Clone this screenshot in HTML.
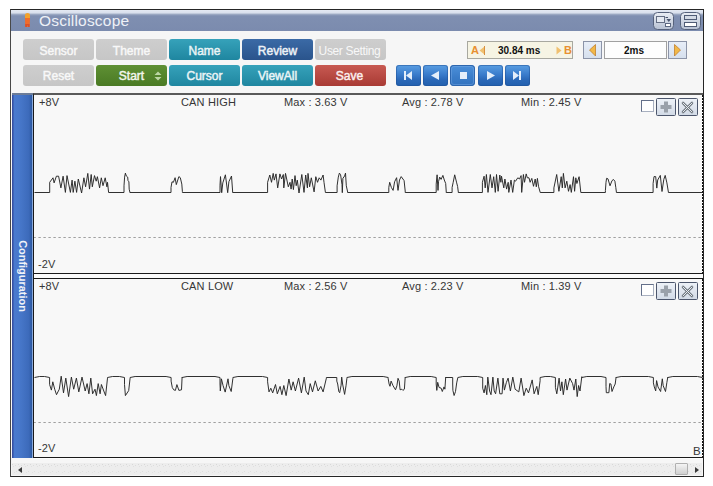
<!DOCTYPE html>
<html><head><meta charset="utf-8">
<style>
*{margin:0;padding:0;box-sizing:border-box}
html,body{width:713px;height:486px;overflow:hidden;background:#fff;font-family:"Liberation Sans",sans-serif}
.abs{position:absolute}
#win{position:absolute;left:10px;top:9px;width:694px;height:468px;border:1px solid #262626;border-left-color:#484848;background:#f6f6f6}
#title{position:absolute;left:11px;top:10px;width:692px;height:21px;background:linear-gradient(#e4e9f3 0px,#d8dfec 3px,#a8b4cb 4px,#8b9ab8 5px,#7f8fb1 6.5px,#7b8bae 21px)}
#title .t{position:absolute;left:29px;top:1px;color:#eef1f7;font-size:15.5px;letter-spacing:0.2px;line-height:19px}
.btn{position:absolute;width:71px;height:21px;border-radius:3px;color:#fff;font-weight:normal;-webkit-text-stroke:0.45px currentColor;font-size:12px;text-align:center;line-height:23px}
.gray{background:linear-gradient(#cecece,#c6c6c6);color:#f8f8f8}
.teal{background:linear-gradient(#36a2ba,#1f86a0);color:#eaf4f6}
.navy{background:linear-gradient(#3b6aa6,#2a548c);color:#eef2f7}
.green{background:linear-gradient(#5f9034,#4a7a24);color:#f2f6ec}
.red{background:linear-gradient(#c85a52,#a83a34);color:#fbeeee}
.mbtn{position:absolute;top:65px;width:25px;height:21px;border-radius:3px;background:linear-gradient(#5a9ee2,#3a7ccc 45%,#2a68b8 70%,#2260ae);box-shadow:inset 0 0 0 1px rgba(30,80,150,0.5)}
.ptxt{position:absolute;font-size:11px;color:#363636;line-height:13px;white-space:nowrap;letter-spacing:0.15px}
.plot{position:absolute;left:33px;width:670px;background:#f8f8f8;border-left:1px solid #1a1a1a;border-bottom:1px solid #1a1a1a}
</style></head><body>
<div id="win"></div>
<div id="title">
  <svg class="abs" style="left:13px;top:3px" width="7" height="14" viewBox="0 0 7 14"><path d="M1 2 Q1 0 3.5 0 Q6 0 6 2 V5 H1Z" fill="#f2a22c"/><path d="M1 5 H6 L5.6 14 H1.2Z" fill="#f06c2a"/><path d="M1.2 11 H5.6 V14 H4 V12.5 H3 V14 H1.2Z" fill="#d8502a"/></svg>
  <div class="t" style="left:28px">Oscilloscope</div>
  <svg class="abs" style="left:642px;top:2px" width="21" height="18" viewBox="0 0 21 18">
    <defs><linearGradient id="ig" x1="0" y1="0" x2="0" y2="1"><stop offset="0" stop-color="#eaeef5"/><stop offset="1" stop-color="#b6c0d2"/></linearGradient></defs>
    <rect x="0.5" y="0.5" width="20" height="17" rx="4" fill="url(#ig)" stroke="#56627c"/>
    <rect x="3.5" y="4.5" width="8" height="6" fill="#e4e9f1" stroke="#646e84"/>
    <rect x="12.5" y="11.5" width="5" height="3" fill="#fff" stroke="#5c6882"/>
    <path d="M12.5 5.5 H15" stroke="#4a5670" fill="none"/><path d="M13.5 7 H18 L15.8 10Z" fill="#4a5670"/>
  </svg>
  <svg class="abs" style="left:669px;top:2px" width="21" height="18" viewBox="0 0 21 18">
    <rect x="0.5" y="0.5" width="20" height="17" rx="4" fill="url(#ig)" stroke="#56627c"/>
    <rect x="4.5" y="3.5" width="12" height="4" fill="#d4dbe6" stroke="#505c76"/>
    <rect x="4.5" y="10.5" width="12" height="4" fill="#fff" stroke="#505c76"/>
  </svg>
</div>

<div class="btn gray" style="left:23px;top:39px;line-height:25px">Sensor</div>
<div class="btn gray" style="left:96px;top:39px;line-height:25px">Theme</div>
<div class="btn teal" style="left:169px;top:39px;line-height:25px">Name</div>
<div class="btn navy" style="left:242px;top:39px;line-height:25px">Review</div>
<div class="btn gray" style="left:315px;top:39px;line-height:25px;-webkit-text-stroke:0;letter-spacing:-0.35px;text-indent:-2px">User Setting</div>
<div class="btn gray" style="left:23px;top:65px">Reset</div>
<div class="btn green" style="left:96px;top:65px"><span style="position:relative;left:0px">Start</span><svg class="abs" style="left:58px;top:6px" width="8" height="10" viewBox="0 0 8 10"><path d="M0.5 4 L4 0.5 L7.5 4Z M0.5 6 L4 9.5 L7.5 6Z" fill="#bcd6a4"/></svg></div>
<div class="btn teal" style="left:169px;top:65px">Cursor</div>
<div class="btn teal" style="left:242px;top:65px">ViewAll</div>
<div class="btn red" style="left:315px;top:65px;text-indent:-2px">Save</div>

<div class="mbtn" style="left:396px"><svg class="abs" style="left:8px;top:6px" width="10" height="10"><rect x="0" y="0" width="2" height="9" fill="#e4eefa"/><path d="M2 4.5 L8 0 V9Z" fill="#e4eefa"/></svg></div>
<div class="mbtn" style="left:423px"><svg class="abs" style="left:8px;top:6px" width="10" height="10"><path d="M0 4.5 L8 0 V9Z" fill="#e4eefa"/></svg></div>
<div class="mbtn" style="left:450px;border-radius:4px;background:linear-gradient(#4c90da,#3a7cc8 60%,#3272be);box-shadow:inset 0 0 0 1px #2d66ae,inset 0 0 0 2px rgba(120,170,230,0.45)"><svg class="abs" style="left:10px;top:7px" width="10" height="10"><rect x="0" y="0" width="7" height="7" fill="#e4eefa"/></svg></div>
<div class="mbtn" style="left:478px"><svg class="abs" style="left:9px;top:6px" width="10" height="10"><path d="M0 0 L8 4.5 L0 9Z" fill="#e4eefa"/></svg></div>
<div class="mbtn" style="left:505px"><svg class="abs" style="left:8px;top:6px" width="10" height="10"><path d="M0 0 L6 4.5 L0 9Z" fill="#e4eefa"/><rect x="6" y="0" width="2" height="9" fill="#e4eefa"/></svg></div>

<div class="abs" style="left:467px;top:41px;width:106px;height:18px;background:#f6f4e4;border:1px solid #a8a8a0"></div>
<div class="abs" style="left:471px;top:44px;font-size:11px;font-weight:bold;color:#e89030;line-height:13px">A</div>
<svg class="abs" style="left:479px;top:46px" width="7" height="10"><path d="M5.5 0.5 L0.5 4.5 L5.5 8.5Z" fill="#f0c070"/><path d="M5.5 0 V9" stroke="#d89040"/></svg>
<div class="abs" style="left:498px;top:44px;font-size:10px;font-weight:bold;color:#111;line-height:13px">30.84 ms</div>
<svg class="abs" style="left:556px;top:46px" width="7" height="10"><path d="M0.5 0.5 L5.5 4.5 L0.5 8.5Z" fill="#f0c070"/></svg>
<div class="abs" style="left:564px;top:44px;font-size:11px;font-weight:bold;color:#e89030;line-height:13px">B</div>

<div class="abs" style="left:583px;top:41px;width:19px;height:18px;background:linear-gradient(#e8eef8,#d6e0ee);border:1px solid #8c94a8"></div>
<svg class="abs" style="left:589px;top:44px" width="8" height="13"><path d="M6.5 0.5 L0.5 6 L6.5 12Z" fill="#f2b848" stroke="#c08030" stroke-width="0.8"/></svg>
<div class="abs" style="left:604px;top:41px;width:63px;height:18px;background:#fdfdfd;border:1px solid #a0a0a0;font-size:10px;font-weight:bold;text-align:center;line-height:17px;padding-right:3px;color:#111">2ms</div>
<div class="abs" style="left:668px;top:41px;width:19px;height:18px;background:linear-gradient(#e8eef8,#d6e0ee);border:1px solid #8c94a8"></div>
<svg class="abs" style="left:674px;top:44px" width="8" height="13"><path d="M0.5 0.5 L6.5 6 L0.5 12Z" fill="#f2b848" stroke="#c08030" stroke-width="0.8"/></svg>

<!-- sidebar -->
<div class="abs" style="left:12px;top:93px;width:21px;height:365px;background:linear-gradient(90deg,#34489a 0px,#3a5cb0 1.2px,#4a7ace 2.5px,#4676c8 9px,#3c6aba 17px,#2e5ba4 19.5px,#8aaadc 20px,#8aaadc 21px)"></div>
<div class="abs" style="left:12px;top:93px;width:21px;height:2px;background:#6c7c98"></div>
<div class="abs" style="left:-22px;top:269px;width:90px;height:14px;transform:rotate(90deg) scaleX(0.95);color:#f0f3f8;font-weight:bold;font-size:11.5px;line-height:14px;text-align:center">Configuration</div>

<!-- plot 1 -->
<div class="plot" style="top:93px;height:181px;border-top:2px solid #5a5a5a"></div>
<div class="abs" style="left:33px;top:274px;width:670px;height:4px;background:#fbfbfb;border-left:1px solid #1a1a1a"></div>
<div class="abs" style="left:34px;top:458px;width:669px;height:1px;background:#fdfdfd"></div>
<div class="plot" style="top:278px;height:180px;border-top:1px solid #1a1a1a"></div>
<svg class="abs" style="left:0;top:0" width="713" height="486">
  <line x1="34" y1="237.5" x2="702" y2="237.5" stroke="#a0a0a0" stroke-dasharray="2.4 2.6" stroke-dashoffset="0.6"/>
  <line x1="34" y1="422.5" x2="702" y2="422.5" stroke="#a0a0a0" stroke-dasharray="2.4 2.6" stroke-dashoffset="0.6"/>
  <line x1="702.5" y1="95" x2="702.5" y2="274" stroke="#111" stroke-dasharray="2 1"/>
  <line x1="702.5" y1="279" x2="702.5" y2="457" stroke="#111" stroke-dasharray="2 1"/>
  <path d="M34.5 192.5 L49.7 192.5 L49.7 182.3 L53.0 177.8 L54.1 182.9 L56.4 176.2 L58.6 176.2 L60.9 187.9 L63.1 176.2 L65.4 192.4 L67.0 175.6 L70.4 192.4 L72.1 180.1 L73.2 192.4 L74.9 181.2 L76.6 192.4 L78.3 179.0 L81.6 193.0 L83.9 177.8 L85.6 186.8 L87.8 173.4 L89.5 189.1 L91.2 174.5 L92.3 186.8 L94.5 175.6 L96.2 181.2 L97.4 176.7 L99.6 187.9 L101.3 177.8 L103.0 185.7 L105.2 177.8 L106.9 186.8 L107.5 182.3 L108.6 192.4 L108.6 192.5 L124.0 192.5 L124.0 185.8 L124.6 177.1 L125.4 173.1 L126.3 176.0 L127.7 177.1 L128.0 180.6 L128.9 181.8 L129.2 189.2 L130.0 192.7 L130.0 192.5 L171.0 192.5 L171.0 187.5 L172.0 181.8 L173.4 182.3 L175.1 177.7 L176.3 184.6 L178.9 176.6 L180.3 177.7 L181.8 184.1 L182.4 191.6 L182.4 192.5 L220.0 192.5 L220.0 185.2 L220.5 176.6 L221.7 192.7 L222.8 182.9 L225.4 174.8 L227.7 192.7 L228.9 181.7 L231.5 176.0 L232.6 191.0 L232.6 192.5 L267.6 192.5 L267.6 182.3 L269.8 175.0 L271.5 182.3 L273.2 173.4 L274.3 180.1 L276.0 173.9 L277.7 187.9 L279.9 173.9 L281.6 179.0 L283.3 174.5 L283.8 187.9 L285.5 173.4 L288.3 186.8 L290.0 182.3 L291.1 189.1 L292.2 179.0 L293.4 189.6 L295.0 175.6 L296.2 185.7 L297.3 180.1 L299.0 193.0 L301.8 174.5 L304.0 192.4 L305.7 175.0 L307.4 187.9 L308.0 173.4 L309.6 186.8 L311.3 177.8 L314.1 191.9 L315.8 176.7 L317.5 182.3 L319.2 177.8 L320.9 180.1 L323.1 175.0 L324.0 182.3 L325.4 192.4 L325.4 192.5 L337.1 192.5 L337.1 185.8 L338.3 177.1 L339.4 173.1 L340.6 174.8 L342.0 184.6 L342.3 192.7 L342.9 178.3 L344.6 176.0 L345.5 173.1 L346.3 185.8 L347.8 192.7 L347.8 192.5 L388.8 192.5 L388.8 187.5 L389.7 182.3 L391.4 187.5 L393.1 190.4 L394.6 181.8 L396.6 177.7 L398.0 190.4 L399.5 180.0 L401.2 176.6 L404.1 180.6 L405.2 191.0 L405.2 192.5 L436.2 192.5 L436.2 184.1 L437.1 174.8 L438.0 190.4 L438.5 181.7 L439.7 177.1 L441.1 179.4 L442.9 175.4 L444.3 180.0 L445.7 183.5 L446.3 192.7 L446.3 192.5 L452.1 192.5 L452.1 187.5 L453.2 182.3 L454.7 174.8 L456.7 182.9 L457.6 186.4 L458.4 192.7 L458.4 192.5 L482.4 192.5 L482.4 182.3 L484.1 176.2 L485.2 187.9 L486.4 174.5 L488.0 192.4 L490.3 174.5 L492.0 187.9 L493.7 176.7 L495.3 192.4 L496.5 174.5 L498.1 191.3 L499.8 175.0 L500.9 182.3 L501.5 176.2 L503.8 187.9 L504.9 179.0 L506.6 189.1 L508.2 182.3 L508.8 192.4 L511.0 180.1 L512.7 192.4 L514.4 180.1 L515.5 181.2 L517.8 177.8 L519.5 179.0 L521.1 175.6 L521.7 192.4 L523.4 174.5 L524.5 182.3 L526.2 173.9 L527.3 177.8 L529.0 177.8 L530.1 182.3 L531.8 178.4 L533.5 186.3 L535.2 179.0 L536.3 186.8 L537.4 178.4 L538.5 186.3 L540.2 192.4 L540.2 192.5 L553.9 192.5 L553.9 187.9 L556.7 174.5 L558.9 191.3 L561.2 176.7 L562.3 187.9 L563.4 173.4 L565.1 187.9 L566.8 181.2 L568.5 191.3 L570.1 184.6 L571.3 192.4 L573.5 176.7 L574.6 191.3 L575.8 177.8 L576.9 183.5 L579.1 176.7 L580.8 192.4 L580.8 192.5 L605.4 192.5 L605.4 190.4 L606.0 182.3 L606.6 178.3 L608.0 178.9 L610.0 185.8 L612.0 180.6 L613.5 179.5 L614.9 181.2 L615.8 187.5 L616.4 192.1 L616.4 192.5 L653.1 192.5 L653.1 183.5 L654.0 176.6 L655.7 176.6 L656.8 188.1 L657.7 180.0 L660.3 175.4 L662.0 191.5 L663.8 179.4 L665.2 175.4 L666.9 182.9 L668.4 192.1 L668.4 192.5 L702.5 192.5" fill="none" stroke="#262626" stroke-width="0.95"/>
  <path d="M34.5 377.5 L39.5 376.5 L44.6 376.5 L49.6 377.5 L49.6 384.5 L51.4 390.1 L52.8 381.8 L54.7 389.2 L56.5 394.7 L59.3 389.2 L61.2 376.2 L63.5 392.9 L65.8 378.1 L68.6 396.6 L71.4 377.1 L73.7 389.2 L76.4 378.1 L78.8 391.9 L82.0 377.1 L85.2 391.0 L87.1 383.6 L88.9 393.8 L90.8 378.1 L92.6 393.8 L95.0 389.2 L96.4 395.6 L98.2 383.6 L100.1 393.8 L101.4 384.5 L103.8 391.0 L105.6 395.6 L107.5 378.1 L107.5 377.5 L112.5 376.5 L119.5 376.5 L124.5 377.5 L124.5 384.5 L125.4 395.6 L128.7 390.6 L130.1 378.1 L130.1 377.5 L135.1 376.5 L166.1 376.5 L171.1 377.5 L171.1 381.1 L172.3 387.5 L173.7 389.8 L175.4 390.4 L176.9 384.6 L178.9 390.4 L181.5 389.8 L182.1 377.1 L182.1 377.5 L187.1 376.5 L215.0 376.5 L220.0 377.5 L220.0 384.0 L220.3 390.9 L221.4 378.8 L223.1 385.7 L225.2 392.1 L228.0 378.8 L228.9 385.7 L231.2 391.5 L232.9 378.3 L232.9 377.5 L237.9 376.5 L262.6 376.5 L267.6 377.5 L267.6 381.8 L269.0 391.9 L270.8 388.2 L272.7 392.9 L275.5 384.5 L277.3 393.8 L280.1 386.4 L281.9 394.7 L283.8 385.5 L286.1 395.6 L288.9 379.0 L291.2 390.1 L293.1 381.8 L295.4 391.0 L298.6 378.1 L301.4 392.9 L304.2 377.1 L306.0 391.0 L308.3 394.7 L310.2 383.6 L312.5 391.9 L315.3 380.8 L318.1 391.0 L320.8 386.4 L323.1 391.9 L326.4 378.1 L326.4 377.5 L336.8 377.5 L336.8 381.1 L337.7 384.0 L338.8 391.5 L339.7 392.7 L341.1 385.2 L341.7 377.1 L342.6 384.0 L344.6 394.4 L346.0 385.8 L346.9 378.3 L346.9 377.5 L351.9 376.5 L383.2 376.5 L388.2 377.5 L388.2 378.8 L389.1 384.0 L390.0 386.3 L391.1 381.1 L393.1 385.8 L395.5 389.8 L396.9 385.8 L398.0 378.3 L399.2 381.1 L400.1 389.8 L401.8 389.2 L402.9 390.4 L404.4 389.2 L405.2 377.1 L405.2 377.5 L410.2 376.5 L431.2 376.5 L436.2 377.5 L436.2 384.0 L436.8 390.4 L437.7 382.3 L439.1 387.5 L441.1 388.1 L442.3 391.5 L444.0 386.9 L444.9 389.2 L445.7 377.1 L445.7 377.5 L452.7 377.5 L452.7 384.0 L452.9 390.4 L454.1 395.5 L455.5 391.5 L456.7 382.9 L457.8 377.7 L457.8 377.5 L462.8 376.5 L477.7 376.5 L482.7 377.5 L482.7 388.2 L484.1 392.9 L485.4 385.5 L486.8 394.7 L487.8 377.1 L489.6 391.0 L491.0 394.7 L492.9 377.1 L494.2 391.0 L495.6 393.8 L497.9 378.1 L499.8 393.8 L502.1 393.8 L503.0 378.1 L504.4 390.1 L506.3 382.7 L508.1 378.1 L510.4 391.0 L512.8 377.1 L515.1 389.2 L518.8 391.9 L521.1 378.1 L523.9 395.6 L526.2 388.2 L528.5 392.9 L532.2 379.9 L534.1 393.8 L536.8 386.4 L538.2 394.7 L540.1 380.8 L540.1 377.5 L545.1 376.5 L550.4 376.5 L555.4 377.5 L555.4 387.3 L556.8 393.8 L559.1 378.1 L560.5 391.0 L561.9 381.8 L563.3 394.7 L565.6 379.0 L567.0 390.1 L569.8 378.1 L572.6 383.6 L574.0 390.1 L575.8 379.0 L577.2 396.6 L578.6 385.5 L580.0 391.0 L581.8 376.7 L581.8 377.5 L586.8 376.5 L601.0 376.5 L606.0 377.5 L606.0 386.3 L606.3 392.7 L608.9 392.7 L609.7 383.5 L610.9 384.0 L612.0 391.5 L613.8 386.9 L615.2 384.0 L616.1 377.1 L616.1 377.5 L621.1 376.5 L648.4 376.5 L653.4 377.5 L653.4 382.9 L654.3 386.9 L655.7 390.9 L656.6 380.6 L658.0 386.9 L660.6 391.5 L662.3 378.8 L663.2 385.7 L665.5 391.5 L666.9 382.3 L667.8 377.1 L667.8 377.5 L672.8 376.5 L697.5 376.5 L702.5 377.5" fill="none" stroke="#262626" stroke-width="0.95"/>
</svg>
<div class="ptxt" style="left:39px;top:96px">+8V</div>
<div class="ptxt" style="left:181px;top:96px">CAN HIGH</div>
<div class="ptxt" style="left:284px;top:96px">Max : 3.63 V</div>
<div class="ptxt" style="left:402px;top:96px">Avg : 2.78 V</div>
<div class="ptxt" style="left:521px;top:96px">Min : 2.45 V</div>
<div class="ptxt" style="left:38px;top:258px">-2V</div>

<div class="ptxt" style="left:39px;top:280px">+8V</div>
<div class="ptxt" style="left:181px;top:280px">CAN LOW</div>
<div class="ptxt" style="left:284px;top:280px">Max : 2.56 V</div>
<div class="ptxt" style="left:402px;top:280px">Avg : 2.23 V</div>
<div class="ptxt" style="left:521px;top:280px">Min : 1.39 V</div>
<div class="ptxt" style="left:38px;top:442px">-2V</div>
<div class="ptxt" style="left:693px;top:445px;font-size:11.5px;letter-spacing:0">B</div>

<!-- plot controls -->
<div class="abs" style="left:641px;top:100px;width:13px;height:12px;background:#fff;border:1px solid #64708a;border-right-color:#a8b0c0;border-bottom-color:#a8b0c0"></div>
<svg class="abs" style="left:656px;top:98px" width="42" height="19" viewBox="0 0 42 19">
 <defs><linearGradient id="cg93" x1="0" y1="0" x2="0" y2="1"><stop offset="0" stop-color="#eef2f8"/><stop offset="1" stop-color="#d2dae6"/></linearGradient></defs>
 <rect x="0.5" y="0.5" width="19" height="17" rx="1" fill="url(#cg93)" stroke="#4c566c"/>
 <path d="M8 3.5 h4 v3.5 h3.5 v4 h-3.5 v3.5 h-4 v-3.5 h-3.5 v-4 h3.5z" fill="#9aa1aa"/>
 <rect x="22.5" y="0.5" width="19" height="17" rx="1" fill="url(#cg93)" stroke="#4c566c"/>
 <path d="M27 5 L36 14 M36 5 L27 14" stroke="#707880" stroke-width="2.6" stroke-linecap="round"/>
 <path d="M27 5 L36 14 M36 5 L27 14" stroke="#e8ecf2" stroke-width="1" stroke-linecap="round"/>
</svg>
<div class="abs" style="left:641px;top:284px;width:13px;height:12px;background:#fff;border:1px solid #64708a;border-right-color:#a8b0c0;border-bottom-color:#a8b0c0"></div>
<svg class="abs" style="left:656px;top:282px" width="42" height="19" viewBox="0 0 42 19">
 <defs><linearGradient id="cg277" x1="0" y1="0" x2="0" y2="1"><stop offset="0" stop-color="#eef2f8"/><stop offset="1" stop-color="#d2dae6"/></linearGradient></defs>
 <rect x="0.5" y="0.5" width="19" height="17" rx="1" fill="url(#cg277)" stroke="#4c566c"/>
 <path d="M8 3.5 h4 v3.5 h3.5 v4 h-3.5 v3.5 h-4 v-3.5 h-3.5 v-4 h3.5z" fill="#9aa1aa"/>
 <rect x="22.5" y="0.5" width="19" height="17" rx="1" fill="url(#cg277)" stroke="#4c566c"/>
 <path d="M27 5 L36 14 M36 5 L27 14" stroke="#707880" stroke-width="2.6" stroke-linecap="round"/>
 <path d="M27 5 L36 14 M36 5 L27 14" stroke="#e8ecf2" stroke-width="1" stroke-linecap="round"/>
</svg>

<!-- scrollbar -->
<div class="abs" style="left:12px;top:463px;width:690px;height:12px;background:#ededed"></div><svg class="abs" style="left:12px;top:463px" width="690" height="12"><defs><pattern id="dp" width="6" height="12" patternUnits="userSpaceOnUse"><rect x="0" y="1" width="1" height="1" fill="#d8d8d8"/><rect x="3" y="2" width="1" height="1" fill="#dcdcdc"/><rect x="1" y="3" width="1" height="1" fill="#e0e0e0"/><rect x="4" y="8" width="1" height="1" fill="#dedede"/><rect x="2" y="9" width="1" height="1" fill="#e2e2e2"/></pattern></defs><rect width="690" height="12" fill="url(#dp)"/></svg>
<svg class="abs" style="left:17.5px;top:467px" width="5" height="7"><path d="M4 0 L0 3 L4 6Z" fill="#3a3a3a"/></svg>
<div class="abs" style="left:675px;top:463px;width:13px;height:12px;background:linear-gradient(#f4f4f4,#d0d0d0);border:1px solid #b0b0b0;border-radius:1px"></div>
<svg class="abs" style="left:694.5px;top:467px" width="5" height="7"><path d="M0 0 L4 3 L0 6Z" fill="#3a3a3a"/></svg>
</body></html>
